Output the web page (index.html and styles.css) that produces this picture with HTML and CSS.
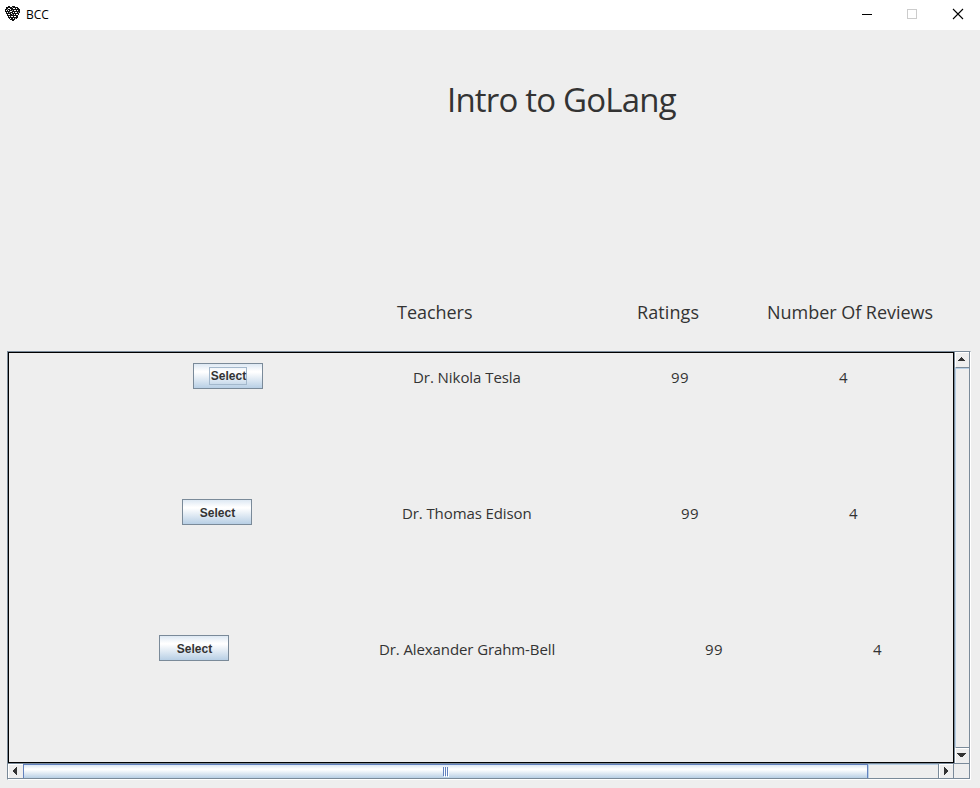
FILE: index.html
```html
<!DOCTYPE html>
<html lang="en">
<head>
<meta charset="utf-8">
<title>BCC</title>
<link rel="stylesheet" href="styles.css">
</head>
<body>
<header class="titlebar">
  <svg class="logo" width="16" height="16" viewBox="0 0 16 16" shape-rendering="crispEdges">
    <path fill="#111" d="M1 1h2V0h2v1h2V0h3v1h3v1h1v1h1v4h-1v2h-1v3h-1v1h-2v1h-1v1H7v-1H5v-1H4v-1H3v-2H2V8H1V6H0V3h1z"/>
    <path fill="#fff" d="M3 2h2v1H3zM8 2h2v1H8zM11 2h1v1h-1zM1 4h1v1H1zM3 4h1v1H3zM5 3h1v1H5zM9 4h2v1H9zM12 4h1v1h-1zM5 5h2v1H5zM2 6h1v1H2zM10 6h2v1h-2zM8 6h1v1H8zM3 8h2v1H3zM6 7h1v1H6zM9 8h1v1H9zM11 8h2v1h-2zM4 10h1v1H4zM6 10h2v1H6zM9 10h2v1H9zM5 12h1v1H5zM8 12h1v1H8z"/>
    <path fill="#999" d="M7 1h1v1H7zM13 6h1v1h-1zM4 6h1v1H4zM7 8h1v1H7zM10 12h1v1h-1zM2 3h1v1H2zM7 4h1v1H7z"/>
  </svg>
  <span class="app">BCC</span>
  <svg class="controls" width="104" height="12" viewBox="0 0 104 12" fill="none" shape-rendering="crispEdges">
    <path stroke="#000" d="M0 6.500h10"/>
    <path stroke="#ccc" d="M45.500 1.500h9v9h-9z"/>
    <path stroke="#000" stroke-width="1.100" shape-rendering="auto" d="M91 1l10 10M101 1L91 11"/>
  </svg>
</header>
<main>
  <h1><span>Intro to GoLang</span></h1>
  <div class="heads">
    <span class="h-teachers">Teachers</span><span class="h-ratings">Ratings</span><span class="h-reviews">Number Of Reviews</span>
  </div>
  <section class="pane">
    <div class="view">
      <div class="row r1"><button class="focused"><span>Select</span></button><span class="name">Dr. Nikola Tesla</span><span class="rating">99</span><span class="count">4</span></div>
      <div class="row r2"><button><span>Select</span></button><span class="name">Dr. Thomas Edison</span><span class="rating">99</span><span class="count">4</span></div>
      <div class="row r3"><button><span>Select</span></button><span class="name">Dr. Alexander Grahm-Bell</span><span class="rating">99</span><span class="count">4</span></div>
    </div>
    <div class="vbar">
      <div class="arrow up"><svg width="9" height="5" viewBox="0 0 9 5" shape-rendering="crispEdges"><path fill="#333" d="M4 0h1v1h1v1h1v1h1v1H1V3h1V2h1V1h1z"/></svg></div>
      <div class="track"></div>
      <div class="arrow down"><svg width="9" height="5" viewBox="0 0 9 5" shape-rendering="crispEdges"><path fill="#333" d="M0 0h9v1H8v1H7v1H6v1H3V3H2V2H1V1H0z"/></svg></div>
    </div>
    <div class="hbar">
      <div class="arrow left"><svg width="4" height="8" viewBox="0 0 4 8" shape-rendering="crispEdges"><path fill="#333" d="M3 0h1v8H3V7H2V6H1V5H0V3h1V2h1V1h1z"/></svg></div>
      <div class="thumb"><i></i><i></i><i></i></div>
      <div class="track"></div>
      <div class="arrow right"><svg width="4" height="8" viewBox="0 0 4 8" shape-rendering="crispEdges"><path fill="#333" d="M0 0h1v1h1v1h1v1h1v2H3v1H2v1H1v1H0z"/></svg></div>
    </div>
    <div class="corner"></div>
  </section>
</main>
</body>
</html>
```
FILE: styles.css
```css
* { box-sizing: border-box; }
body { margin: 0; width: 980px; height: 788px; overflow: hidden; background: #eee; color: #333; font-family: "Open Sans", "Noto Sans", sans-serif; }
.titlebar { display: flex; align-items: center; height: 30px; padding: 0 14px 2px 5px; background: #fff; color: #000; }
.logo { margin-top: -1px; }
.app { margin-left: 5px; font-size: 12px; letter-spacing: 0; }
.controls { margin-left: auto; }
h1 { margin: 0; height: 260px; padding: 46px 0 0 447px; font-size: 33px; line-height: 48px; font-weight: 400; letter-spacing: -0.8px; white-space: nowrap; }
.heads { display: flex; height: 61px; padding-left: 397px; font-size: 18px; line-height: 44px; letter-spacing: -0.03px; white-space: nowrap; }
.h-teachers { width: 240px; }
.h-ratings { width: 130px; letter-spacing: 0.1px; }
.pane { display: grid; grid-template: 411px 16px / 946px 16px; width: 964px; height: 429px; margin-left: 7px; border: 1px solid #7a8a99; border-right-color: #fff; border-bottom-color: #fff; }
.view { border: 1px solid #000; padding-top: 10px; }
.row { display: flex; align-items: center; height: 26px; margin-bottom: 110px; font-size: 15px; line-height: 26px; white-space: nowrap; }
.r1 { padding-left: 184px; }
.r2 { padding-left: 173px; }
.r3 { padding-left: 150px; }
button { width: 70px; height: 26px; margin: 0 150px 0 0; padding: 1px 0 0 1px; border: 1px solid #7a8a99; background: linear-gradient(#dde8f3 0, #fff 30%, #fff 34%, #b8cfe5 100%); color: #333; font: bold 12px/18px "Liberation Sans", Arial, sans-serif; }
button span { display: inline-block; width: 38px; }
.focused { padding: 0; }
.focused span { padding: 1px 0 0 1px; line-height: 17px; box-shadow: inset 0 0 0 1px #a3b8cc; }
.name { padding-top: 1px; letter-spacing: -0.1px; }
.r1 .name { width: 258px; letter-spacing: -0.06px; }
.r2 .name { width: 279px; }
.r3 .name { width: 326px; }
.rating { width: 168px; padding-top: 1px; letter-spacing: 0.4px; }
.count { padding-top: 1px; }
.arrow { display: flex; align-items: center; justify-content: center; flex: none; background: #eee; }
.vbar { display: flex; flex-direction: column; border-left: 1px solid #7a8a99; border-right: 1px solid #7a8a99; }
.vbar .track { flex: 1; border-left: 1px solid #b8cfe5; border-top: 1px solid #b8cfe5; }
.up { height: 16px; padding: 0 2px 1px 0; border-bottom: 1px solid #7a8a99; border-top: 1px solid #fff; border-left: 1px solid #fff; }
.down { height: 16px; padding-right: 2px; border-top: 1px solid #7a8a99; border-left: 1px solid #fff; box-shadow: inset 0 1px #fff; }
.hbar { display: flex; border-top: 1px solid #7a8a99; border-bottom: 1px solid #7a8a99; }
.left { width: 15px; padding: 0 2px 1px 0; border-top: 1px solid #fff; border-left: 1px solid #fff; }
.right { width: 16px; padding: 0 0 1px; border-left: 1px solid #7a8a99; border-right: 1px solid #7a8a99; box-shadow: inset 1px 1px #fff; }
.hbar .track { flex: 1; border-top: 1px solid #b8cfe5; border-left: 1px solid #b8cfe5; }
.thumb { display: flex; justify-content: center; align-items: center; gap: 1px; width: 845px; border: 1px solid #6382bf; border-bottom: 0; background: linear-gradient(#dde8f3, #fff 30%, #fff 35%, #b8cfe5); }
.thumb i { width: 1px; height: 9px; background: #6382bf; box-shadow: 1px 1px #fff; }
.corner { border: 1px solid #7a8a99; border-left: 0; }
```
